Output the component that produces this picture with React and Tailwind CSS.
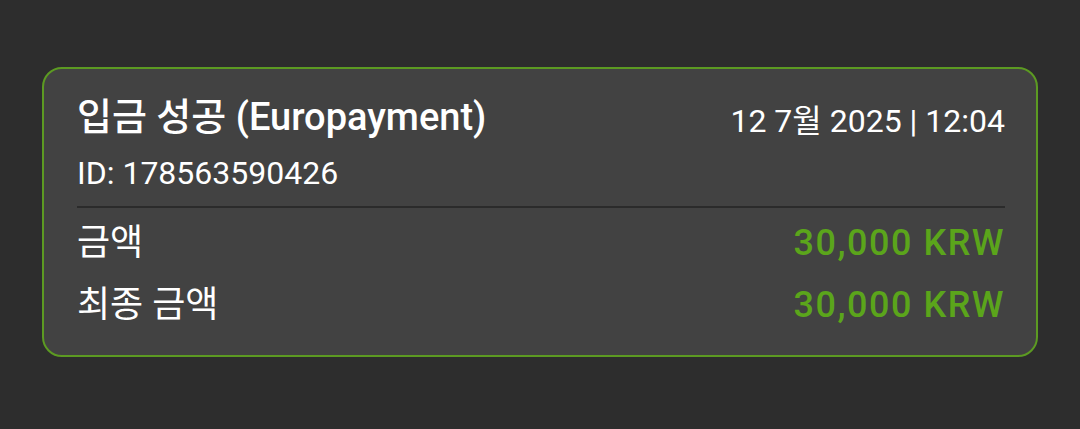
import React from 'react';

const font = { fontFamily: 'Roboto, "Noto Sans CJK KR", sans-serif' };

const rows = [
  { label: '금액', value: '30,000 KRW' },
  { label: '최종 금액', value: '30,000 KRW' },
];

const App = () => {
  return (
    <div className="h-[429px] w-full bg-[#2d2d2d] pt-[67px] px-[42px]" style={font}>
      <div className="rounded-[20px] border-2 border-[#5c9a22] bg-[#424242] pl-[33px] pr-[31px] pt-[26px] pb-[19px] text-white">
        <div className="flex items-start justify-between">
          <h2 className="text-[38px] leading-[44px] font-medium">입금 성공 (Europayment)</h2>
          <span className="mt-[4px] text-[32px] leading-[44px]">12 7월 2025 | 12:04</span>
        </div>
        <p className="mt-[10px] text-[32px] leading-[40px]">ID: 178563590426</p>
        <div className="mt-[13px] h-[2px] bg-[#2b2b2b]" />
        <div className="mt-[4px]">
          {rows.map((r) => (
            <div key={r.label} className="flex items-center justify-between h-[62px]">
              <span className="text-[36px]">{r.label}</span>
              <span className="text-[36px] font-medium tracking-[1.5px] text-[#5ba51b]">{r.value}</span>
            </div>
          ))}
        </div>
      </div>
    </div>
  );
};

export default App;
